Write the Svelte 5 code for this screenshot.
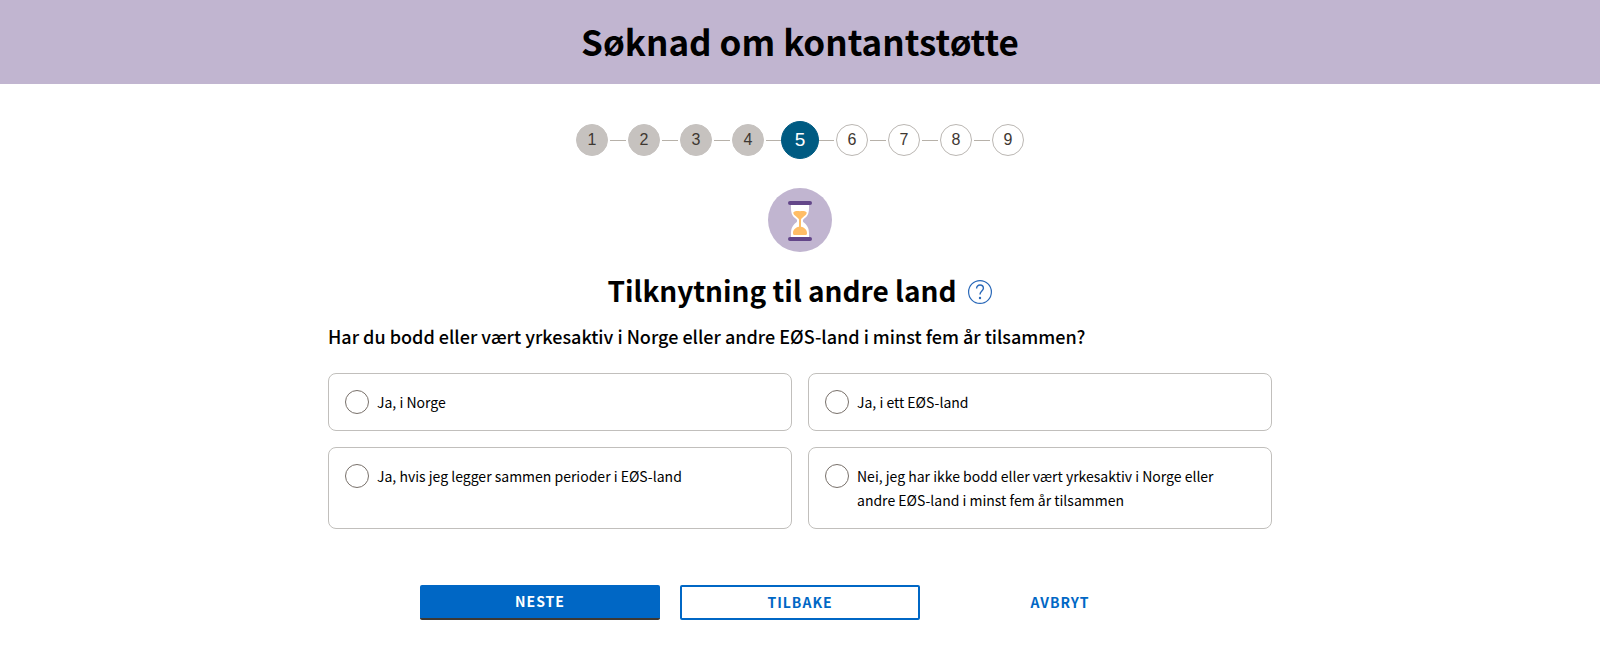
<script>
  const steps = [1, 2, 3, 4, 5, 6, 7, 8, 9];
  const current = 5;
  const options = [
    'Ja, i Norge',
    'Ja, i ett EØS-land',
    'Ja, hvis jeg legger sammen perioder i EØS-land',
    'Nei, jeg har ikke bodd eller vært yrkesaktiv i Norge eller andre EØS-land i minst fem år tilsammen'
  ];
  let selected = $state(null);
</script>

<header>
  <h1>Søknad om kontantstøtte</h1>
</header>

<main>
  <ol class="steps">
    {#each steps as step}
      <li class:done={step < current} class:active={step === current} aria-current={step === current ? 'step' : undefined}>
        <span>{step}</span>
      </li>
    {/each}
  </ol>

  <svg class="hourglass" viewBox="0 0 64 64" aria-hidden="true">
    <circle cx="32" cy="32" r="32" fill="#c1b5d0" />
    <path d="M23 16H41V20C41 26.500 39 28.500 35.800 31C34.600 32 34.600 33.500 35.800 34.500C39.500 37.500 41 40 41 46V49H23V46C23 40 24.500 37.500 28.200 34.500C29.400 33.500 29.400 32 28.200 31C25 28.500 23 26.500 23 20Z" fill="#fff" />
    <path d="M25.300 24.500C26.500 22.800 30 23 32 23.200C34 23 37.500 22.800 38.700 24.500C38.700 27.800 33.600 29.200 33 31.500V38.800C36.500 39.500 39 41.800 39 45C39 46.500 38.500 47 37.500 47H26.500C25.500 47 25 46.500 25 45C25 41.800 27.500 39.500 31 38.800V31.500C30.400 29.200 25.300 27.800 25.300 24.500Z" fill="#ffbd66" />
    <rect x="20" y="13" width="24" height="4" rx="2" fill="#634689" />
    <rect x="20" y="49" width="24" height="4" rx="2" fill="#634689" />
  </svg>

  <div class="title">
    <h2>Tilknytning til andre land</h2>
    <button type="button" class="help" aria-label="Hjelp">
      <svg viewBox="0 0 24 24" fill="none" stroke="#2968b8" aria-hidden="true">
        <circle cx="12" cy="12" r="11.400" stroke-width="1.200" />
        <path d="M8.600 8.400C8.600 6.400 10 5 12 5S15.400 6.400 15.400 8.300C15.400 11 12 11.200 12 14.500" stroke-width="1.400" />
        <circle cx="12" cy="18" r="1.200" fill="#2968b8" stroke="none" />
      </svg>
    </button>
  </div>

  <form onsubmit={(event) => event.preventDefault()}>
    <fieldset>
      <legend>Har du bodd eller vært yrkesaktiv i Norge eller andre EØS-land i minst fem år tilsammen?</legend>
      <div class="options">
        {#each options as option, index}
          <label>
            <input type="radio" name="tilknytning" value={index} bind:group={selected} />
            <span>{option}</span>
          </label>
        {/each}
      </div>
    </fieldset>

    <div class="actions">
      <button type="submit" class="primary">NESTE</button>
      <button type="button" class="secondary">TILBAKE</button>
      <button type="button" class="flat">AVBRYT</button>
    </div>
  </form>
</main>

<style>
  :global(body) {
    margin: 0;
    background: #fff;
    color: #000;
    font-family: "Noto Sans CJK SC", "Noto Sans", sans-serif;
    font-size: 14px;
    line-height: 24px;
  }

  header {
    padding: 15px 16px 17px;
    background: #c1b5d0;
    text-align: center;
  }

  h1,
  h2 {
    margin: 0;
    font-weight: 700;
  }

  h1 {
    font-size: 35px;
    line-height: 52px;
  }

  main {
    box-sizing: border-box;
    max-width: 976px;
    margin: 0 auto;
    padding: 37px 16px 32px;
  }

  .steps {
    display: flex;
    justify-content: center;
    align-items: center;
    gap: 20px;
    margin: 0 0 29px;
    padding: 0;
    list-style: none;
    font-family: "Liberation Sans", Arial, sans-serif;
    font-size: 16px;
  }

  .steps li {
    position: relative;
    width: 32px;
  }

  .steps li + li::before {
    content: "";
    position: absolute;
    top: 50%;
    left: -18px;
    width: 16px;
    height: 1px;
    background: #b7b1a9;
  }

  .steps span {
    position: relative;
    display: grid;
    place-items: center;
    box-sizing: border-box;
    height: 32px;
    border: 1px solid #bbb7b3;
    border-radius: 50%;
    color: #3e3832;
  }

  .steps .done span {
    border-color: #c6c2bf;
    background: #c6c2bf;
  }

  .steps .active span {
    z-index: 1;
    height: 38px;
    margin: 0 -3px;
    border-color: #005b82;
    background: #005b82;
    color: #fff;
    font-size: 19px;
  }

  .hourglass {
    display: block;
    width: 64px;
    height: 64px;
    margin: 0 auto 16px;
  }

  .title {
    display: flex;
    justify-content: center;
    align-items: center;
    gap: 12px;
  }

  h2 {
    padding-bottom: 4px;
    font-size: 28px;
    line-height: 44px;
  }

  .help {
    display: block;
    width: 24px;
    height: 24px;
    padding: 0;
    border: 0;
    background: none;
  }

  .help svg {
    display: block;
  }

  fieldset {
    margin: 0;
    padding: 0;
    border: 0;
  }

  legend {
    padding: 6px 0 8px;
    font-size: 18px;
    font-weight: 500;
    line-height: 28px;
  }

  .options {
    display: grid;
    grid-template-columns: repeat(auto-fit, minmax(320px, 1fr));
    gap: 16px;
    padding-top: 15px;
  }

  label {
    display: flex;
    align-items: flex-start;
    gap: 8px;
    padding: 16px 32px 16px 16px;
    border: 1px solid #c1bfbc;
    border-radius: 8px;
  }

  input {
    appearance: none;
    box-sizing: border-box;
    flex: none;
    width: 24px;
    height: 24px;
    margin: 0;
    border: 1px solid #78706a;
    border-radius: 50%;
  }

  input:checked {
    border: 7px solid #0067c5;
  }

  .actions {
    display: flex;
    flex-wrap: wrap;
    justify-content: center;
    gap: 20px;
    margin-top: 56px;
  }

  .actions button {
    width: 240px;
    height: 35px;
    padding: 0 0 2px;
    border: 2px solid transparent;
    border-radius: 2px;
    background: none;
    color: #0067c5;
    font-family: inherit;
    font-size: 14px;
    font-weight: 700;
    letter-spacing: 1px;
    line-height: 24px;
  }

  .actions .primary {
    border: 0;
    border-bottom: 2px solid #3e3832;
    background: #0067c5;
    color: #fff;
  }

  .actions .secondary {
    border-color: #0067c5;
  }
</style>
